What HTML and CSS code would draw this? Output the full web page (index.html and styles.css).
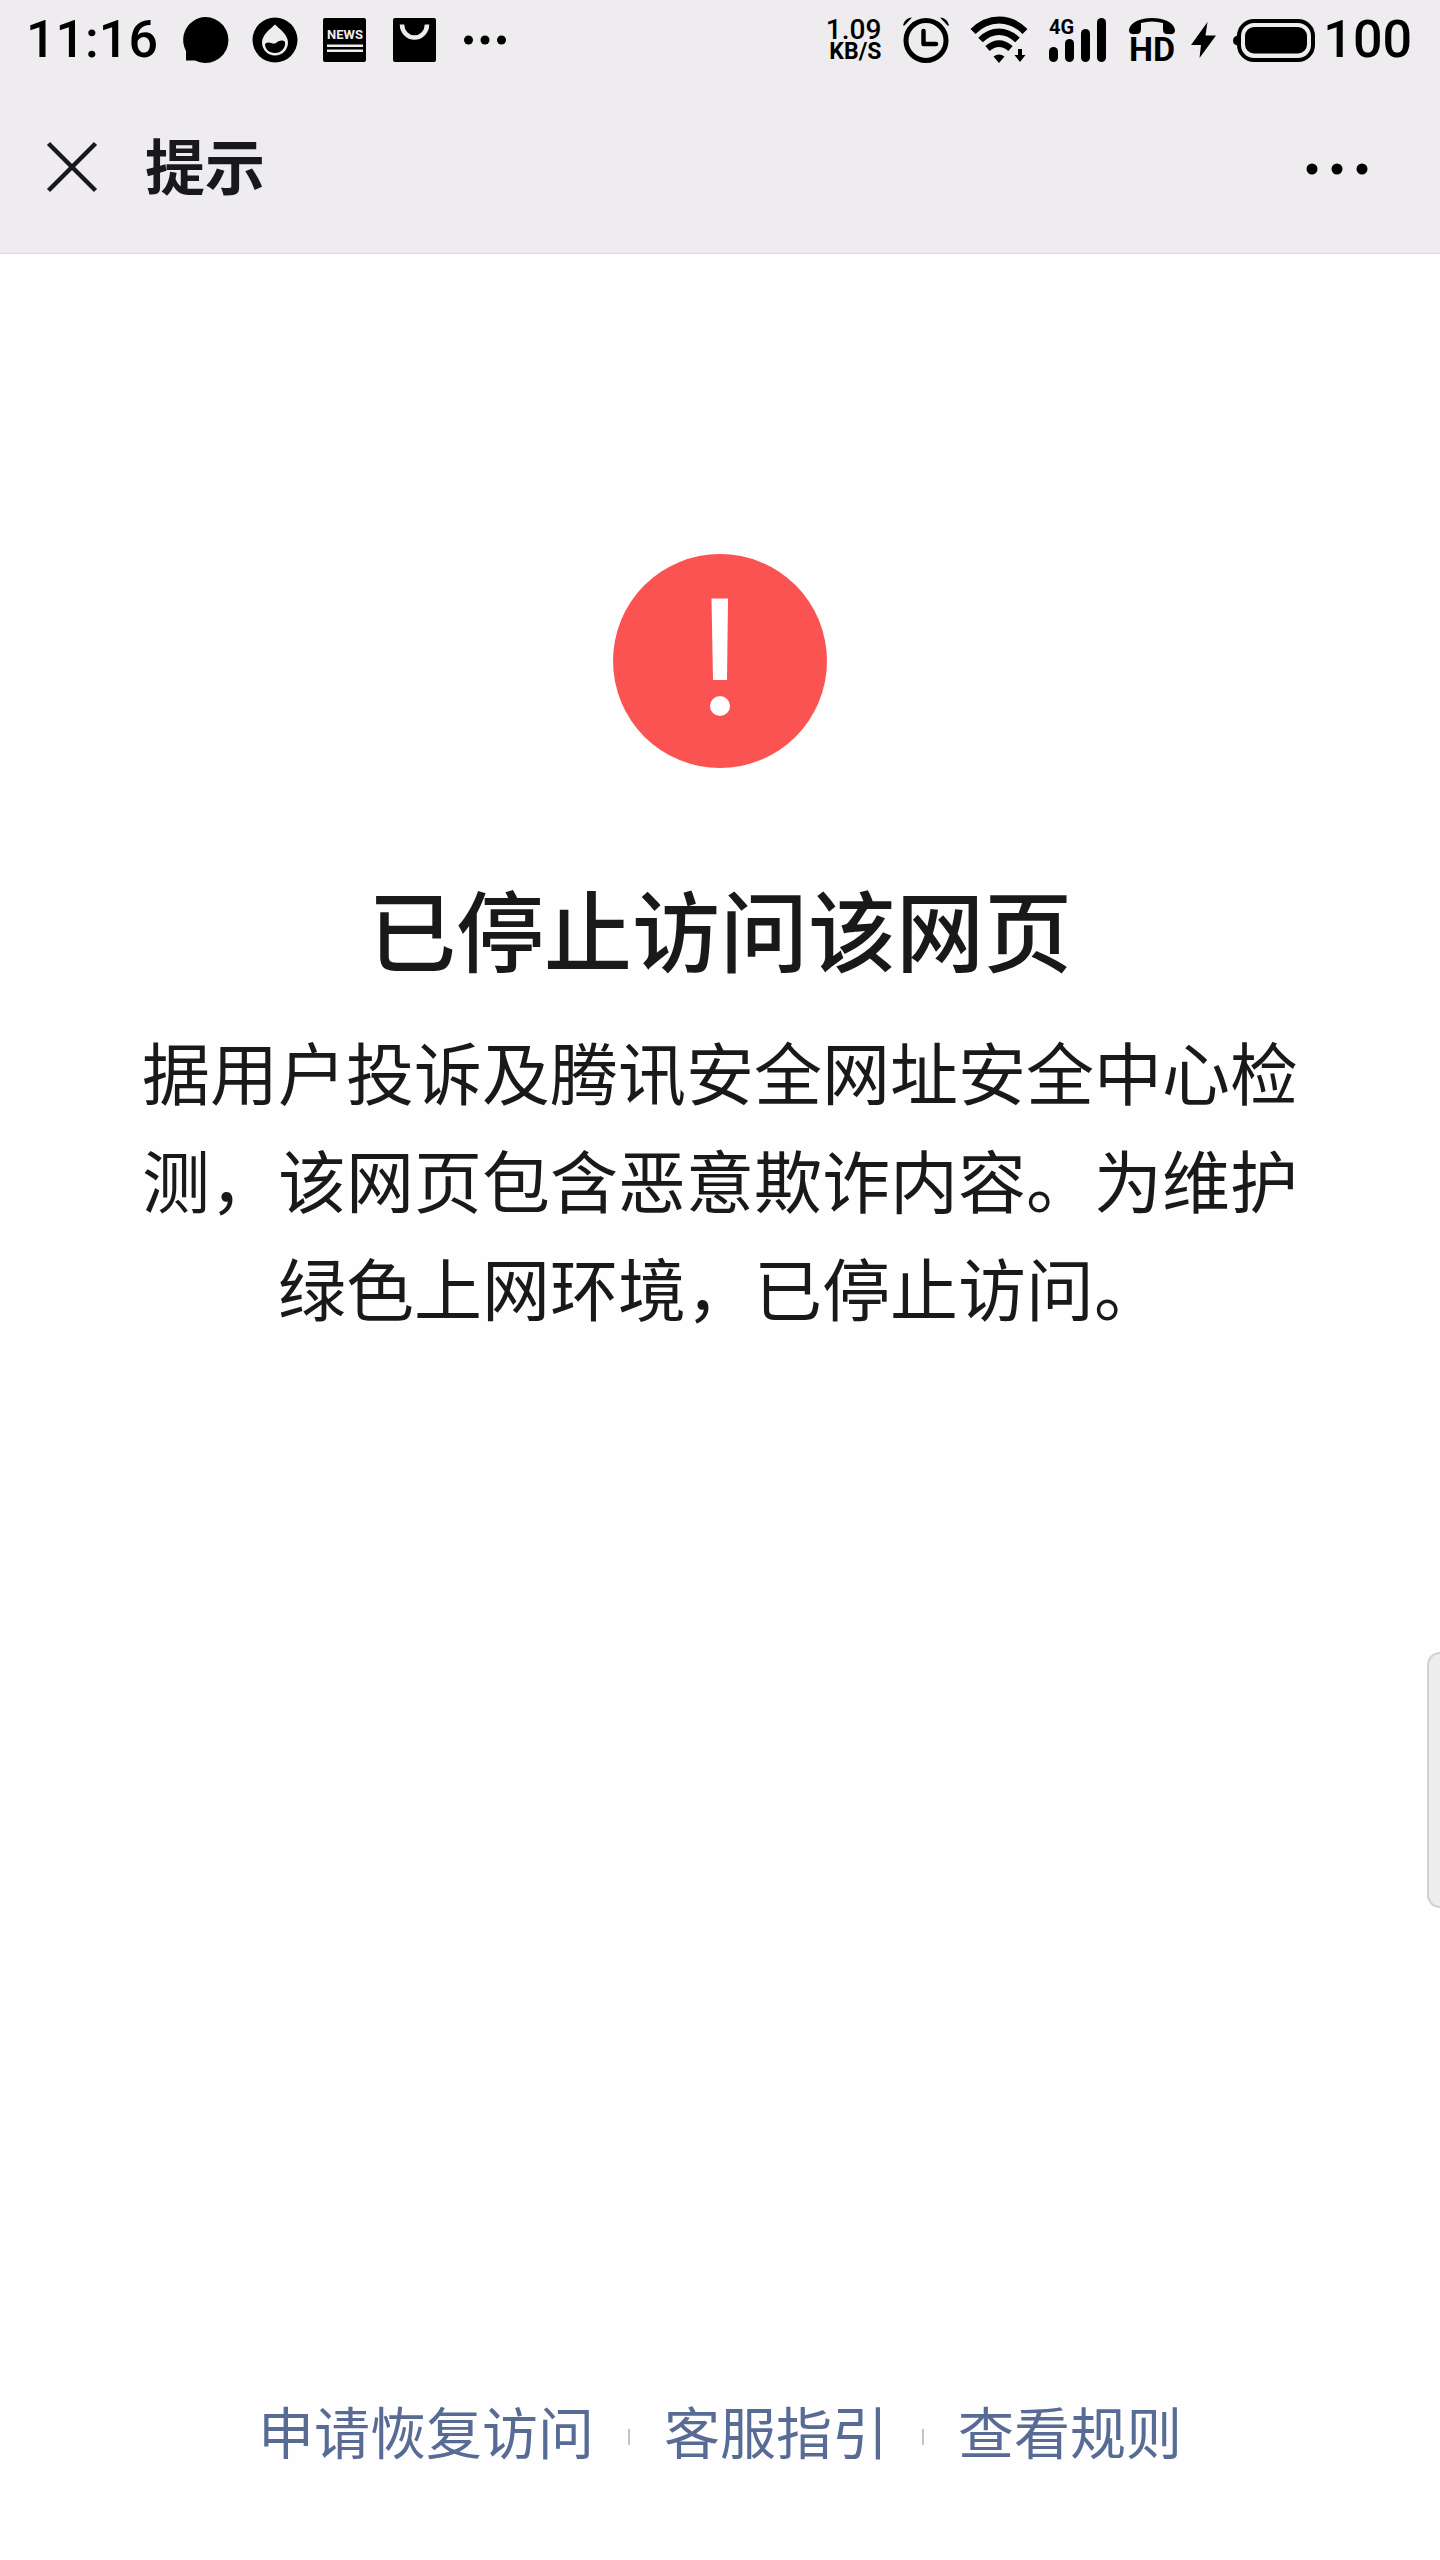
FILE: index.html
```html
<!DOCTYPE html>
<html lang="zh-CN">
<head>
    <meta charset="UTF-8">
    <meta name="viewport" content="width=device-width, initial-scale=1.0">
    <title>提示</title>
    <link rel="stylesheet" href="styles.css">
</head>
<body>
    <header>
        <div class="status-bar">
            <div class="status-left">
                <span class="clock">11:16</span>
                <svg width="46" height="46" viewBox="0 0 46 46">
                    <path d="M23 0a23 23 0 1 1-10 43.500H4V34A23 23 0 0 1 23 0z"/>
                </svg>
                <svg width="46" height="46" viewBox="0 0 46 46">
                    <circle cx="23" cy="23" r="22.500"/>
                    <path class="light" d="M23 7.500c4 4 13 10 13 18a13 13 0 0 1-26 0c0-8 9-14 13-18z"/>
                    <path d="M13 27c4-4 7 1 11-1 4-3 7-3 9-1 1 6-4 11-10 11s-10-4-10-9z"/>
                </svg>
                <svg width="46" height="46" viewBox="0 0 46 46">
                    <rect x="1" y="1" width="43" height="44" rx="2"/>
                    <text class="light news" x="23" y="22" text-anchor="middle">NEWS</text>
                    <path class="light" d="M5 27.500h36v2.500H5zM5 32.500h36v2.500H5z"/>
                </svg>
                <svg width="46" height="46" viewBox="0 0 46 46">
                    <rect x="1" y="1" width="43" height="44" rx="2"/>
                    <path d="M10 7.500a12.500 13 0 0 0 25 0" fill="none" stroke="#eeecef" stroke-width="4.500"/>
                </svg>
                <svg width="46" height="46" viewBox="0 0 46 46">
                    <circle cx="6.500" cy="23" r="4.500"/>
                    <circle cx="23" cy="23" r="4.500"/>
                    <circle cx="39.500" cy="23" r="4.500"/>
                </svg>
            </div>
            <div class="status-right">
                <div class="speed">
                    <span class="speed-value">1.09</span>
                    <span class="speed-unit">KB/S</span>
                </div>
                <svg width="46" height="46" viewBox="0 0 46 46">
                    <circle cx="23" cy="23.500" r="20" fill="none" stroke="#000" stroke-width="5"/>
                    <path d="M20.500 14v13H33" fill="none" stroke="#000" stroke-width="4.500" stroke-linecap="round" stroke-linejoin="round"/>
                    <path d="M0 8.500C1 4 4 1 9 0.500L1.500 8.500zM46 8.500C45 4 42 1 37 0.500l7.500 8z"/>
                </svg>
                <svg width="56" height="46" viewBox="0 0 56 46">
                    <g fill="none" stroke="#000">
                        <path d="M2 14.500C17-1 39-1 54 14.500" stroke-width="7"/>
                        <path d="M9.500 23C21 12 35 12 46.500 23" stroke-width="6.500"/>
                        <path d="M16.500 31.500C24 25 32 25 39.500 31.500" stroke-width="6.500"/>
                    </g>
                    <path d="M22.500 39.500q5.500-4 11 0L28 46z"/>
                    <path d="M47 32h4v6h3.500L49 45l-5.500-7H47z"/>
                </svg>
                <svg width="58" height="46" viewBox="0 0 58 46">
                    <text class="net" x="0" y="17">4G</text>
                    <rect x="0" y="30" width="9" height="15" rx="4.500"/>
                    <rect x="16" y="22" width="9" height="23" rx="4.500"/>
                    <rect x="32" y="12" width="9" height="33" rx="4.500"/>
                    <rect x="48" y="1" width="9" height="44" rx="4.500"/>
                </svg>
                <svg width="46" height="46" viewBox="0 0 46 46">
                    <path d="M0 13C2-3 44-3 46 13c0 4-3 4.500-7 4-4 0-5-2-5-5V6Q23 3 12 6v6c0 3-1 5-5 5-4 .5-7 0-7-4z"/>
                    <text class="hd" x="23" y="44" text-anchor="middle">HD</text>
                </svg>
                <svg class="bolt" width="26" height="46" viewBox="0 0 26 46">
                    <path d="M16.500 5L0 28h10L8.500 41 25 18.500H14.500z"/>
                </svg>
                <svg class="battery" width="82" height="46" viewBox="0 0 82 46">
                    <path d="M6 18v11Q0 28 0 23.500T6 18z"/>
                    <rect x="6" y="4" width="74" height="39" rx="15" fill="none" stroke="#000" stroke-width="4"/>
                    <rect x="12" y="10" width="62" height="26.500" rx="9"/>
                </svg>
                <span class="clock">100</span>
            </div>
        </div>
        <nav class="nav-bar">
            <button class="icon-button" type="button" aria-label="关闭">
                <svg width="50" height="50" viewBox="0 0 50 50">
                    <path d="M1.500 1.500l47 47M48.500 1.500l-47 47" stroke="#19181b" stroke-width="4.500"/>
                </svg>
            </button>
            <h1>提示</h1>
            <button class="icon-button more" type="button" aria-label="更多">
                <svg width="62" height="50" viewBox="0 0 62 50">
                    <circle cx="6" cy="27" r="5.500"/>
                    <circle cx="31" cy="27" r="5.500"/>
                    <circle cx="56" cy="27" r="5.500"/>
                </svg>
            </button>
        </nav>
    </header>
    <main>
        <svg class="warn-icon" width="214" height="214" viewBox="0 0 214 214">
            <circle cx="107" cy="107" r="107" fill="#fb5352"/>
            <path d="M98.500 44.500h16.500l-1 81.500h-14z" fill="#fff"/>
            <circle cx="107" cy="152" r="10" fill="#fff"/>
        </svg>
        <h2>已停止访问该网页</h2>
        <p>据用户投诉及腾讯安全网址安全中心检测，该网页包含恶意欺诈内容。为维护绿色上网环境，已停止访问。</p>
    </main>
    <footer>
        <a href="#">申请恢复访问</a>
        <span class="divider"></span>
        <a href="#">客服指引</a>
        <span class="divider"></span>
        <a href="#">查看规则</a>
    </footer>
    <div class="side-handle"></div>
</body>
</html>
```

FILE: styles.css
```css
* {
    box-sizing: border-box;
}
body {
    margin: 0;
    min-height: 100vh;
    display: flex;
    flex-direction: column;
    background-color: #fefefe;
    color: #19181b;
    font-family: 'Noto Sans CJK SC', sans-serif;
}
header {
    background-color: #eeecef;
    border-bottom: 1px solid #dddbde;
}
svg {
    display: block;
    flex: none;
    overflow: visible;
}
.status-bar {
    height: 80px;
    padding: 0 28px 0 26px;
    display: flex;
    justify-content: space-between;
    align-items: center;
    color: #000;
    font-family: Roboto, sans-serif;
    font-weight: 500;
}
.status-left, .status-right {
    display: flex;
    align-items: center;
    gap: 24px;
}
.status-right {
    gap: 22px;
}
.clock {
    font-size: 52px;
    line-height: 60px;
}
.speed {
    display: flex;
    flex-direction: column;
    align-items: flex-end;
}
.speed-value {
    font-size: 28px;
    line-height: 24px;
}
.speed-unit {
    font-size: 23px;
    line-height: 20px;
    font-weight: 700;
}
.light {
    fill: #eeecef;
}
.news {
    font-size: 13px;
    font-weight: 700;
}
.net {
    font-size: 20px;
    font-weight: 700;
}
.hd {
    font-size: 34px;
    font-weight: 700;
}
.bolt {
    margin: 0 -6px;
}
.battery {
    margin-right: -14px;
}
.nav-bar {
    height: 173px;
    padding: 0 72px 0 47px;
    display: flex;
    align-items: center;
}
.icon-button {
    padding: 0;
    border: none;
    background: none;
    cursor: pointer;
}
.more {
    margin-left: auto;
}
h1 {
    margin: 0 0 6px 48px;
    font-size: 60px;
    line-height: 80px;
    font-weight: 700;
}
main {
    flex: 1;
    padding: 300px 140px 0;
    display: flex;
    flex-direction: column;
    align-items: center;
    text-align: center;
}
h2 {
    margin: 95px 0 26px;
    font-size: 88px;
    line-height: 128px;
    font-weight: 500;
}
p {
    margin: 0;
    font-size: 68px;
    line-height: 108px;
}
footer {
    padding: 0 40px 84px;
    display: flex;
    justify-content: center;
    align-items: center;
    gap: 34px;
}
a {
    color: #576b95;
    font-size: 56px;
    line-height: 92px;
    text-decoration: none;
}
.divider {
    width: 2px;
    height: 16px;
    margin-top: 14px;
    background-color: #c4c4c8;
}
.side-handle {
    position: fixed;
    top: 1652px;
    right: 0;
    width: 13px;
    height: 256px;
    background-color: #eeecef;
    border: 2px solid #d2d0d3;
    border-right: none;
    border-radius: 16px 0 0 16px;
}
```
